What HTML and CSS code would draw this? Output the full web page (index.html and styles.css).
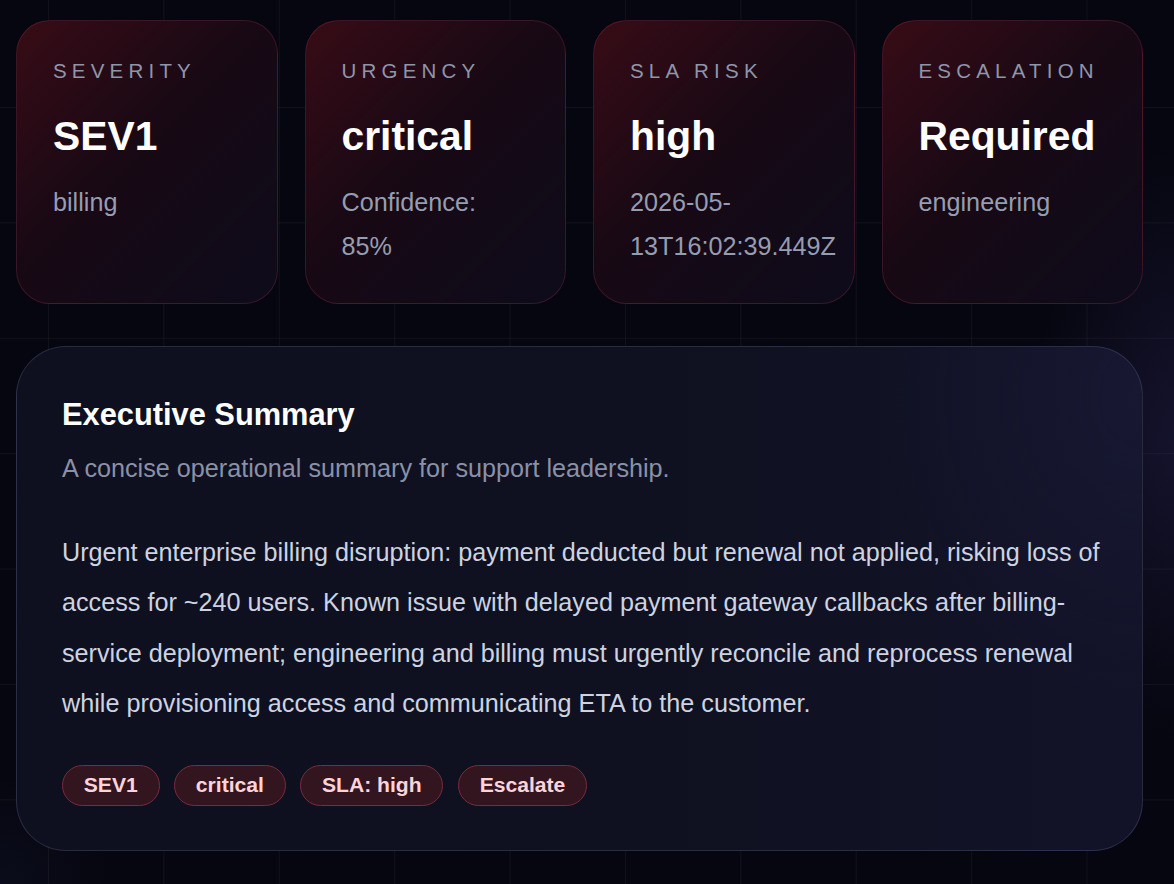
FILE: index.html
```html
<!DOCTYPE html>
<html lang="en">
<head>
<meta charset="utf-8">
<title>Incident Triage</title>
<link rel="stylesheet" href="styles.css">
</head>
<body>
<main class="page">
  <section class="metrics">
    <div class="metric">
      <div class="metric-label">Severity</div>
      <div class="metric-value">SEV1</div>
      <div class="metric-sub">billing</div>
    </div>
    <div class="metric">
      <div class="metric-label">Urgency</div>
      <div class="metric-value">critical</div>
      <div class="metric-sub">Confidence: 85%</div>
    </div>
    <div class="metric">
      <div class="metric-label">SLA Risk</div>
      <div class="metric-value">high</div>
      <div class="metric-sub">2026-05-13T16:02:39.449Z</div>
    </div>
    <div class="metric">
      <div class="metric-label">Escalation</div>
      <div class="metric-value">Required</div>
      <div class="metric-sub">engineering</div>
    </div>
  </section>

  <section class="summary">
    <h2 class="summary-title">Executive Summary</h2>
    <p class="summary-desc">A concise operational summary for support leadership.</p>
    <p class="summary-body">Urgent enterprise billing disruption: payment deducted but renewal not applied, risking loss of access for ~240 users. Known issue with delayed payment gateway callbacks after billing-service deployment; engineering and billing must urgently reconcile and reprocess renewal while provisioning access and communicating ETA to the customer.</p>
    <div class="chips">
      <span class="chip">SEV1</span>
      <span class="chip">critical</span>
      <span class="chip">SLA: high</span>
      <span class="chip">Escalate</span>
    </div>
  </section>
</main>
</body>
</html>
```

FILE: styles.css
```css
* { box-sizing: border-box; }

html, body {
  margin: 0;
  padding: 0;
}

body {
  min-height: 884px;
  font-family: "Liberation Sans", Arial, sans-serif;
  color: #e5e7ef;
  background-color: #05060f;
  background-image:
    radial-gradient(ellipse 140px 300px at 100% 50%, rgba(75, 65, 150, 0.22), rgba(75, 65, 150, 0) 100%),
    radial-gradient(ellipse 110px 110px at 0% 100%, rgba(60, 60, 120, 0.12), rgba(60, 60, 120, 0) 100%),
    linear-gradient(rgba(255, 255, 255, 0.045) 1px, transparent 1px),
    linear-gradient(90deg, rgba(255, 255, 255, 0.045) 1px, transparent 1px);
  background-size: 100% 100%, 100% 100%, 115.4px 115.4px, 115.4px 115.4px;
  background-position: 0 0, 0 0, 48px 107px, 48px 107px;
  background-repeat: no-repeat, no-repeat, repeat, repeat;
}

.page {
  padding: 20px 31px 20px 16px;
}

.metrics {
  display: grid;
  grid-template-columns: repeat(4, minmax(0, 1fr));
  column-gap: 27px;
}

.metric {
  border: 1px solid rgba(165, 55, 80, 0.27);
  border-radius: 34px;
  padding: 35px 37px 35px 36px;
  background:
    linear-gradient(135deg, rgba(125, 18, 28, 0.4) 0%, rgba(65, 10, 25, 0.26) 45%, rgba(18, 18, 45, 0.35) 100%),
    #0a0812;
}

.metric-label {
  font-size: 20.5px;
  line-height: 30px;
  letter-spacing: 5.2px;
  text-transform: uppercase;
  color: #8e96aa;
}

.metric-value {
  margin-top: 26px;
  font-size: 40.8px;
  line-height: 49px;
  font-weight: 700;
  color: #ffffff;
}

.metric-sub {
  margin-top: 19px;
  font-size: 25.2px;
  line-height: 44px;
  color: #959db2;
}

.summary {
  margin-top: 42px;
  border: 1px solid rgba(150, 155, 200, 0.2);
  border-radius: 50px;
  padding: 46px 33px 44px 45px;
  background:
    radial-gradient(ellipse 260px 300px at 100% 10%, rgba(34, 32, 70, 0.35), rgba(34, 32, 70, 0) 100%),
    linear-gradient(90deg, #0e1020 0%, #0f1120 55%, #121328 100%);
}

.summary-title {
  margin: 0;
  font-size: 30.8px;
  line-height: 43px;
  font-weight: 700;
  color: #ffffff;
}

.summary-desc {
  margin: 14px 0 0;
  font-size: 25.2px;
  line-height: 37px;
  color: #8a91a7;
}

.summary-body {
  margin: 40px 0 0;
  font-size: 25.2px;
  line-height: 50.3px;
  color: #cdd3e0;
}

.chips {
  display: flex;
  gap: 14.5px;
  margin-top: 37px;
}

.chip {
  display: inline-block;
  padding: 0 20.8px;
  height: 41px;
  line-height: 38px;
  border: 1.5px solid #7a2c3b;
  border-radius: 999px;
  background: #32151f;
  color: #fdd3da;
  font-size: 21.1px;
  font-weight: 700;
}
```
